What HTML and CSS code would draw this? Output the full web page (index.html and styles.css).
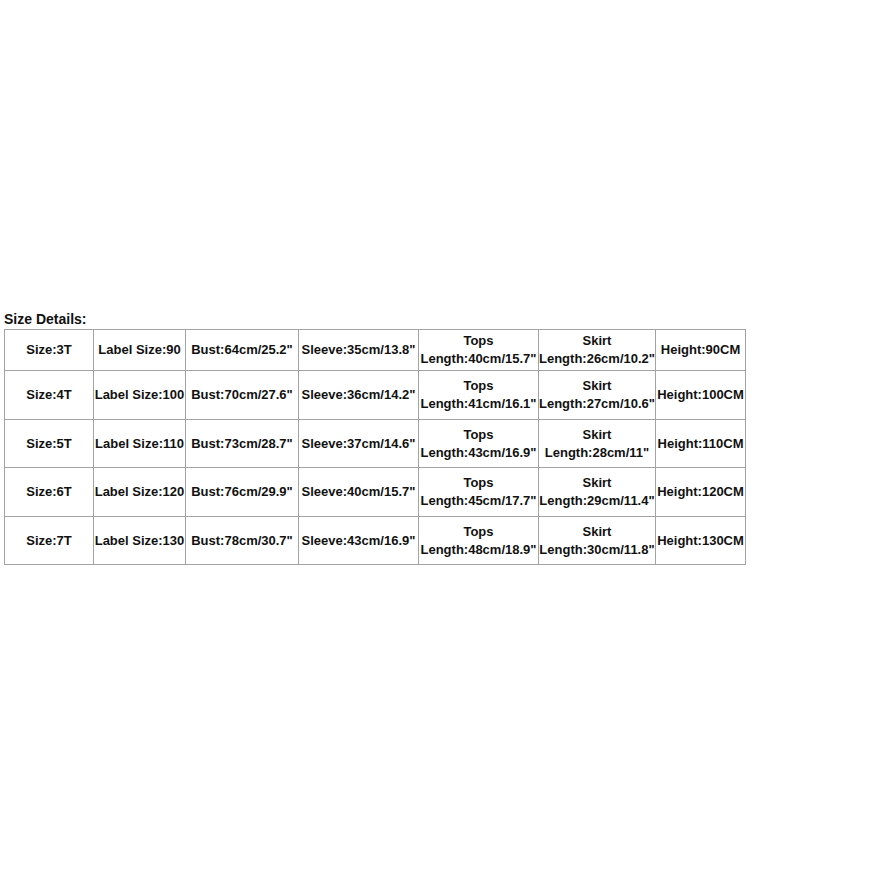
FILE: index.html
```html
<!DOCTYPE html>
<html>
<head>
<meta charset="utf-8">
<link rel="stylesheet" href="styles.css">
</head>
<body>
<div class="wrap">
  <div class="title">Size Details:</div>
  <table class="sizes">
    <colgroup>
      <col class="c1"><col class="c2"><col class="c3"><col class="c4"><col class="c5"><col class="c6"><col class="c7">
    </colgroup>
    <tr class="r1">
      <td>Size:3T</td><td>Label Size:90</td><td>Bust:64cm/25.2"</td><td>Sleeve:35cm/13.8"</td>
      <td>Tops<br>Length:40cm/15.7"</td><td>Skirt<br>Length:26cm/10.2"</td><td>Height:90CM</td>
    </tr>
    <tr class="r2">
      <td>Size:4T</td><td>Label Size:100</td><td>Bust:70cm/27.6"</td><td>Sleeve:36cm/14.2"</td>
      <td>Tops<br>Length:41cm/16.1"</td><td>Skirt<br>Length:27cm/10.6"</td><td>Height:100CM</td>
    </tr>
    <tr class="r3">
      <td>Size:5T</td><td>Label Size:110</td><td>Bust:73cm/28.7"</td><td>Sleeve:37cm/14.6"</td>
      <td>Tops<br>Length:43cm/16.9"</td><td>Skirt<br>Length:28cm/11"</td><td>Height:110CM</td>
    </tr>
    <tr class="r4">
      <td>Size:6T</td><td>Label Size:120</td><td>Bust:76cm/29.9"</td><td>Sleeve:40cm/15.7"</td>
      <td>Tops<br>Length:45cm/17.7"</td><td>Skirt<br>Length:29cm/11.4"</td><td>Height:120CM</td>
    </tr>
    <tr class="r5">
      <td>Size:7T</td><td>Label Size:130</td><td>Bust:78cm/30.7"</td><td>Sleeve:43cm/16.9"</td>
      <td>Tops<br>Length:48cm/18.9"</td><td>Skirt<br>Length:30cm/11.8"</td><td>Height:130CM</td>
    </tr>
  </table>
</div>
</body>
</html>
```

FILE: styles.css
```css
html, body {
  margin: 0;
  padding: 0;
  background: #ffffff;
}
body {
  font-family: "Liberation Sans", Arial, sans-serif;
  font-weight: bold;
  color: #111111;
}
.wrap {
  padding: 311px 0 0 4px;
}
.title {
  font-size: 14px;
  line-height: 16px;
  height: 18px;
}
.sizes {
  border-collapse: collapse;
  table-layout: fixed;
  width: 742px;
  font-size: 13px;
  line-height: 18px;
}
.sizes td {
  border: 1px solid #a3a3a3;
  text-align: center;
  vertical-align: middle;
  padding: 0;
  white-space: nowrap;
}
.c1 { width: 89px; }
.c2 { width: 92px; }
.c3 { width: 113px; }
.c4 { width: 120px; }
.c5 { width: 120px; }
.c6 { width: 117px; }
.c7 { width: 90px; }
.r1 td { height: 40px; }
.r2 td { height: 48px; }
.r3 td { height: 47px; }
.r4 td { height: 48px; }
.r5 td { height: 47px; }
```
